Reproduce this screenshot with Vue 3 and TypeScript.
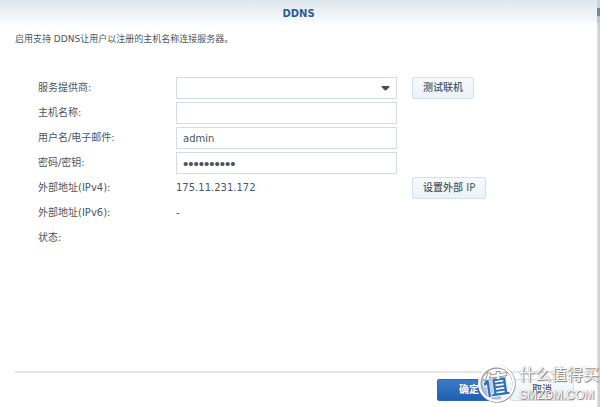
<script setup lang="ts">
import { ref } from 'vue'

const provider = ref('')
const hostname = ref('')
const username = ref('admin')
const password = ref('0123456789')
const ipv4 = '175.11.231.172'
const ipv6 = '-'
</script>

<template>
  <div class="screen">
    <form class="dialog" @submit.prevent>
      <header class="titlebar">
        <h1>DDNS</h1>
      </header>
      <main class="content">
        <p class="intro">启用支持 DDNS让用户以注册的主机名称连接服务器。</p>
        <div class="rows">
          <div class="row">
            <label for="provider">服务提供商:</label>
            <div class="select-box">
              <select id="provider" v-model="provider">
                <option value=""></option>
              </select>
              <svg class="arrow" viewBox="0 0 9 5" aria-hidden="true">
                <path d="M0.5 0H8.5Q8.7 0.8 8 1.4L5.2 4.3Q4.5 4.9 3.8 4.3L1 1.4Q0.3 0.8 0.5 0Z" fill="#414e59" />
              </svg>
            </div>
            <button type="button" class="btn">测试联机</button>
          </div>
          <div class="row">
            <label for="hostname">主机名称:</label>
            <input id="hostname" v-model="hostname" type="text" />
          </div>
          <div class="row">
            <label for="username">用户名/电子邮件:</label>
            <input id="username" v-model="username" type="text" />
          </div>
          <div class="row">
            <label for="password">密码/密钥:</label>
            <input id="password" v-model="password" type="password" />
          </div>
          <div class="row">
            <span>外部地址(IPv4):</span>
            <span>{{ ipv4 }}</span>
            <button type="button" class="btn">设置外部 IP</button>
          </div>
          <div class="row">
            <span>外部地址(IPv6):</span>
            <span>{{ ipv6 }}</span>
          </div>
          <div class="row">
            <span>状态:</span>
          </div>
        </div>
      </main>
      <footer class="footer">
        <button type="submit" class="btn action primary">确定</button>
        <button type="button" class="btn action">取消</button>
      </footer>
    </form>
    <div class="edge"><span></span></div>
    <div class="watermark">
      <svg class="badge" viewBox="0 0 42 42" aria-hidden="true">
        <defs>
          <linearGradient id="badge-ink" gradientUnits="userSpaceOnUse" x1="0" y1="0" x2="0" y2="42">
            <stop offset="0.38" stop-color="#ffffff" />
            <stop offset="0.38" stop-color="#2f6db9" />
          </linearGradient>
          <linearGradient id="badge-outline" gradientUnits="userSpaceOnUse" x1="0" y1="0" x2="0" y2="42">
            <stop offset="0.38" stop-color="#858585" />
            <stop offset="0.38" stop-color="#ffffff" />
          </linearGradient>
        </defs>
        <circle cx="21" cy="21" r="17" fill="#ffffff" fill-opacity="0.6" stroke="#979797" stroke-width="3.4" />
        <circle cx="20.5" cy="20.5" r="17.2" fill="none" stroke="#ffffff" stroke-width="2.4" />
        <g transform="rotate(-8 21 21)">
          <text x="20" y="31" class="badge-text" fill="url(#badge-ink)" stroke="url(#badge-outline)">值</text>
        </g>
      </svg>
      <div class="brand">
        <span class="brand-name">什么值得买</span>
        <span class="brand-site">SMZDM.COM</span>
      </div>
    </div>
  </div>
</template>

<style>
body {
  margin: 0;
  background: #ffffff;
}
</style>

<style scoped>
.screen {
  position: relative;
  display: flex;
  min-height: 100vh;
  overflow: hidden;
  color: #4b565e;
  font-family: "DejaVu Sans", "Noto Sans CJK SC", sans-serif;
  font-size: 10px;
  line-height: 12px;
}

.dialog {
  flex: 1;
  display: flex;
  flex-direction: column;
  background: linear-gradient(#dce6ee, #ffffff 27px);
}

.titlebar {
  padding: 7px 0;
  text-align: center;
}

h1 {
  margin: 0;
  color: #2d5b97;
  font-size: 10px;
  line-height: 14px;
}

.content {
  flex: 1;
  padding: 5px 15px 0;
}

.intro {
  margin: 0 0 32px;
  font-size: 9px;
}

.rows {
  display: grid;
  gap: 3px;
  padding-left: 23px;
}

.row {
  display: grid;
  grid-template-columns: 138px minmax(100px, 221px) auto;
  justify-content: start;
  align-items: center;
  min-height: 22px;
}

input,
select {
  box-sizing: border-box;
  width: 100%;
  height: 22px;
  margin: 0;
  padding: 0 6px;
  border: 1px solid #d3dce6;
  border-radius: 0;
  background: #ffffff;
  color: inherit;
  font: inherit;
  appearance: none;
}

input[type="password"] {
  font-family: "Liberation Sans", sans-serif;
  font-size: 15px;
}

.select-box {
  position: relative;
}

select {
  display: block;
}

.arrow {
  position: absolute;
  top: 9px;
  right: 7px;
  width: 9px;
  height: 5px;
  pointer-events: none;
}

.btn {
  box-sizing: border-box;
  height: 22px;
  margin: 0 0 0 15px;
  padding: 0 10px;
  border: 1px solid #d3dfe9;
  border-radius: 2px;
  background: linear-gradient(#f6fafd, #ebf2f8);
  color: inherit;
  font: inherit;
  font-weight: 500;
  justify-self: start;
}

.footer {
  display: flex;
  justify-content: flex-end;
  gap: 9px;
  margin: 0 9px 0 15px;
  padding: 6px 14px 6px 0;
  border-top: 2px solid #e6e6e6;
}

.action {
  width: 64px;
  margin: 0;
  padding: 0;
}

.primary {
  border-color: #2a68b5;
  background: linear-gradient(#3a7bc8, #2160b0);
  color: #ffffff;
  font-weight: 700;
}

.edge {
  width: 3px;
  background: linear-gradient(90deg, #e4e4e4, #c9c9c9);
}

.edge span {
  display: block;
  height: 23px;
  background: linear-gradient(#c9d5e0 8px, #7b8797 8px 16px, #b4c8de 16px);
}

.watermark {
  position: absolute;
  right: 1px;
  bottom: 2px;
  display: flex;
  align-items: flex-end;
  gap: 1px;
  pointer-events: none;
}

.badge {
  width: 42px;
  height: 42px;
}

.badge-text {
  stroke-width: 1.6px;
  paint-order: stroke;
  font-family: "Noto Sans CJK SC", sans-serif;
  font-size: 26px;
  font-weight: 500;
  text-anchor: middle;
}

.brand {
  display: grid;
  color: #ffffff;
  font-family: "Liberation Sans", "Noto Sans CJK SC", sans-serif;
  line-height: 20px;
  text-shadow: 1px 1px 1px #777777, 0 0 1px #888888;
}

.brand-name {
  font-size: 16px;
}

.brand-site {
  font-size: 12px;
}
</style>
